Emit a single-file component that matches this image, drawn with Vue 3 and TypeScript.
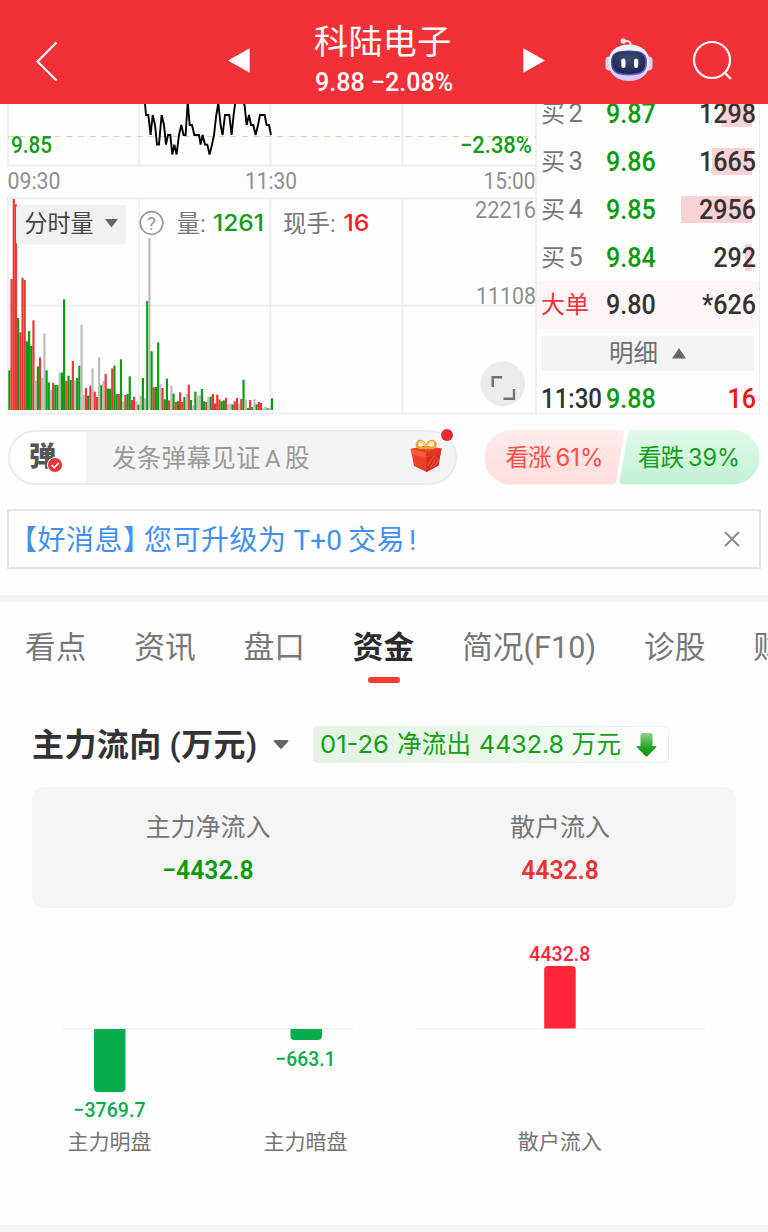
<script setup lang="ts">
type Tone = 'r' | 'g' | 'n'

interface Order {
  side: string
  level: string
  price: string
  volume: string
  depth: number
}

const orders: Order[] = [
  { side: '买', level: '2', price: '9.87', volume: '1298', depth: 31 },
  { side: '买', level: '3', price: '9.86', volume: '1665', depth: 40 },
  { side: '买', level: '4', price: '9.85', volume: '2956', depth: 71 },
  { side: '买', level: '5', price: '9.84', volume: '292', depth: 7 },
]

// One entry per minute: tone followed by height in thirds of a pixel
const series =
  'g119 r393 r633 r617 g276 r233 r396 r390 g206 g237 g192 r269 n87 g131 r158 n96 n230 g119 g83 n60 ' +
  'r82 g75 g75 n112 g112 g332 r88 g103 g90 r147 n88 g96 g133 n256 n45 r66 g43 r73 n125 r55 ' +
  'r39 n158 g74 n87 r108 g64 g64 r125 g133 g48 r48 g152 n26 r45 g48 g101 r30 r39 n26 g16 ' +
  'n43 g96 n36 g327 n516 g176 r68 g69 g203 n78 r66 g32 g94 r29 n73 g49 r24 g26 r53 r24 ' +
  'g39 n48 r76 g30 n14 g55 n44 n44 g63 g26 r24 n39 g40 r48 r20 r46 r32 g26 g29 r37 ' +
  'n17 n19 g17 r26 r36 n19 r33 g91 n32 g6 r30 g9 n32 g17 r24 r21 n5 n9 g5 n7 g35'

const tones: Record<Tone, string> = { r: '#f0353a', g: '#0b9c10', n: '#bdbdbd' }

const volumes = series.split(' ').map((s, i) => {
  const h = Number(s.slice(1)) / 3
  return { x: 8.3 + i * 2.188, y: 306 - h, h, fill: tones[s[0] as Tone] }
})

const pricePoints =
  '144.5,-6 146,11 148.3,11 150.6,31 152.7,11 155,21 157,40.6 159,40.6 161.6,11 164,21 166,40.6 168,31 170.3,31 172.3,50.5 174.3,40.6 176.6,50.5 179,31 181.3,21 183.6,31 185.6,31 187.7,-2 189.7,21 192,21 194.3,31 199,31 200.6,40.6 202.6,31 205,40.6 207.3,40.6 209.6,50.5 212,40.6 214,31 216.3,11 218.3,-1 220.6,21 222.6,31 225,11 229.3,11 231.6,31 233.6,11 235.6,-4 241,-4 244.6,1 246.6,21 249,11 251,21 253.3,21 255.6,31 258,21 260,11 264.6,11 266.6,21 269,21 271,31'

const tabs = ['看点', '资讯', '盘口', '资金', '简况(F10)', '诊股', '财务']
const activeTab = '资金'

const flows = [
  { name: '主力明盘', value: '−3769.7', cx: 109.5, bar: 'M94 92h31.5v59a4 4 0 0 1-4 4h-23.5a4 4 0 0 1-4-4z', ty: 180, w: 72, fill: '#07ad4c' },
  { name: '主力暗盘', value: '−663.1', cx: 305.5, bar: 'M290.5 92h31.5v7a4 4 0 0 1-4 4h-23.5a4 4 0 0 1-4-4z', ty: 128.5, w: 60, fill: '#07ad4c' },
  { name: '散户流入', value: '4432.8', cx: 559.8, bar: 'M544.2 91.5h31.5v-58.5a4 4 0 0 0-4-4h-23.5a4 4 0 0 0-4 4z', ty: 23.5, w: 61, fill: '#ff2438' },
]
</script>

<template>
  <div class="page">
    <header class="top">
      <svg class="back" width="24" height="42" viewBox="0 0 24 42"><path d="M21.500 2.500 2.500 21.500l19 19" /></svg>
      <svg class="prev" width="22" height="26" viewBox="0 0 22 26"><path d="M0 12.500 21.700.2v24.600z" fill="#fff" /></svg>
      <div class="stock">
        <div class="name">科陆电子</div>
        <div class="quote">9.88 −2.08%</div>
      </div>
      <svg class="next" width="22" height="26" viewBox="0 0 22 26"><path d="M22 12.500.3.200v24.600z" fill="#fff" /></svg>
      <svg class="robot" width="50" height="48" viewBox="0 0 50 48">
        <defs>
          <linearGradient id="shell" x1="0" y1="0" x2="0" y2="1">
            <stop offset="0" stop-color="#f3f5fa" /><stop offset=".7" stop-color="#e3e2f4" /><stop offset="1" stop-color="#cfc8f2" />
          </linearGradient>
          <linearGradient id="rim" x1="0" y1="0" x2="1" y2="1">
            <stop offset="0" stop-color="#3c3f7e" /><stop offset=".6" stop-color="#6a4fd6" /><stop offset="1" stop-color="#7a68f5" />
          </linearGradient>
          <radialGradient id="visor" cx=".5" cy=".3" r=".8">
            <stop offset="0" stop-color="#3d4c70" /><stop offset="1" stop-color="#16204a" />
          </radialGradient>
        </defs>
        <path d="M20 6.500c4-1.500 6.500-.2 7 4" fill="none" stroke="#ece9f4" stroke-width="1.800" />
        <circle cx="19.300" cy="6" r="2.700" fill="#f0e8f0" />
        <rect x="1.500" y="21.500" width="8" height="14" rx="4" fill="#cfd6ee" />
        <rect x="40.500" y="21.500" width="8" height="14" rx="4" fill="#cfd6ee" />
        <path d="M25 9.500c12 0 20.500 6.500 20.500 18S37 46 25 46 4.500 39 4.500 27.500 13 9.500 25 9.500z" fill="url(#shell)" />
        <path d="M25 15.500c13 0 18 2.500 18 12s-5 13-18 13-18-3.500-18-13 5-12 18-12z" fill="url(#rim)" />
        <path d="M25 16.500c11.500 0 16.500 2 16.500 10.800S36.500 39 25 39 8.300 36.100 8.300 27.300 13.500 16.500 25 16.500z" fill="url(#visor)" />
        <rect x="17.300" y="23.500" width="4.200" height="9.500" rx="2" fill="#fff" />
        <rect x="30" y="23.500" width="4.200" height="9.500" rx="2" fill="#fff" />
      </svg>
      <svg class="search" width="42" height="42" viewBox="0 0 42 42">
        <circle cx="20" cy="20" r="18" /><path d="m32 32 7 7" />
      </svg>
    </header>

    <section class="market">
      <svg class="chart" width="537" height="311" viewBox="0 0 537 311">
        <g class="grid">
          <path d="M8 0V62M139 0V61M270.500 0V61M402.500 0V61M536 0V311M7 61.500H536" />
          <path d="M8 94V310M139 94V309M270.500 94V309M402.500 94V309M7 94.500H536M8 201.500H536" />
          <path d="M7 309.500H537" />
        </g>
        <path class="dash" d="M8 32.500H536" />
        <polyline class="price" :points="pricePoints" />
        <rect v-for="(v, i) in volumes" :key="i" :x="v.x" :y="v.y" :height="v.h" :fill="v.fill" width="2.200" />
        <g class="tag">
          <text x="11" y="48.500" textLength="41" lengthAdjust="spacingAndGlyphs">9.85</text>
          <text x="460" y="48.500" textLength="72" lengthAdjust="spacingAndGlyphs">−2.38%</text>
        </g>
        <g class="axis">
          <text x="7.500" y="85" textLength="53" lengthAdjust="spacingAndGlyphs">09:30</text>
          <text x="245" y="85" textLength="52" lengthAdjust="spacingAndGlyphs">11:30</text>
          <text x="483.500" y="85" textLength="52" lengthAdjust="spacingAndGlyphs">15:00</text>
          <text x="475" y="113.500" textLength="61" lengthAdjust="spacingAndGlyphs">22216</text>
          <text x="476" y="200" textLength="60" lengthAdjust="spacingAndGlyphs">11108</text>
        </g>
        <rect x="16" y="101" width="110" height="39.500" rx="3" fill="#f1f1f1" />
        <text class="cn dark" x="24.500" y="128" textLength="69" lengthAdjust="spacingAndGlyphs">分时量</text>
        <path d="M105 115h13l-6.500 8.500z" fill="#666" />
        <circle cx="151.500" cy="119" r="11.300" fill="none" stroke="#999" stroke-width="1.700" />
        <text x="151.500" y="126" class="help" text-anchor="middle">?</text>
        <text class="cn" x="176.500" y="127.500">量:</text>
        <text class="fig" x="213" y="127" textLength="51" lengthAdjust="spacingAndGlyphs" fill="#0f9d12">1261</text>
        <text class="cn" x="283" y="127.500">现手:</text>
        <text class="fig" x="343.500" y="127" textLength="26" lengthAdjust="spacingAndGlyphs" fill="#fb1a22">16</text>
        <circle cx="502.800" cy="279.800" r="22.300" fill="#ebebeb" />
        <path d="M492.700 283v-9.700h9.500M514 285v9.700h-10.500" fill="none" stroke="#707070" stroke-width="2.400" />
      </svg>

      <div class="book">
        <div v-for="o in orders" :key="o.level" class="row">
          <span class="side">{{ o.side }}<i>{{ o.level }}</i></span>
          <span class="cell up">{{ o.price }}</span>
          <span class="qty"><b class="depth" :style="{ width: o.depth + 'px' }"></b><span class="cell end">{{ o.volume }}</span></span>
        </div>
        <div class="row big">
          <span class="side hot">大单</span>
          <span class="cell">9.80</span>
          <span class="qty"><span class="cell end">*626</span></span>
        </div>
        <div class="detail">明细<svg width="14" height="11" viewBox="0 0 14 11"><path d="M0 10.500 7 0l7 10.500z" fill="#666" /></svg></div>
        <div class="row last">
          <span class="cell time">11:30</span>
          <span class="cell up">9.88</span>
          <span class="qty"><span class="cell end red">16</span></span>
        </div>
      </div>
    </section>

    <section class="social">
      <div class="danmu">
        <div class="dan">
          <span>弹</span>
          <svg width="16" height="16" viewBox="0 0 16 16"><circle cx="8" cy="8" r="7.500" fill="#f0352f" stroke="#fff" /><path d="m4.500 8 2.700 2.700 4.500-4.700" fill="none" stroke="#fff" stroke-width="1.700" /></svg>
        </div>
        <div class="hint">发条弹幕见证<i>A</i>股</div>
        <svg class="gift" width="34" height="36" viewBox="0 0 34 36">
          <path d="M2 12h30l-2.500 15.500L17.500 34 5 28z" fill="#ea4329" />
          <path d="M17 16h14.500l-2 11.500L17.500 34z" fill="#d92b20" />
          <path d="m21 30 7-11M18.500 28l7-11M25 29l5-8" stroke="#f0684a" stroke-width="1" />
          <path d="M1.500 11 16 8l16.500 2.500-1 6L17 19 2.500 16.500z" fill="#f8603c" />
          <path d="M1.500 11 16 8l16.500 2.500L17 14.500z" fill="#f43c28" />
          <path d="M17 14.500V19l14.500-2.500 1-6z" fill="#df3424" />
          <path d="M17 9C12 11 7.500 10 8 6s6-5 9 3c3-8 9-7 9.500-3S22 11 17 9z" fill="none" stroke="#e9a52e" stroke-width="2.600" />
          <path d="M9.500 5c1.500-3 5.500-1 7 3M18 8c1.500-4 5.500-6 7-3" fill="none" stroke="#ffe08a" stroke-width="1.100" />
        </svg>
        <b class="dot"></b>
      </div>
      <svg class="vote" width="276" height="55" viewBox="0 0 276 55">
        <defs>
          <linearGradient id="bull" x1="0" y1="0" x2="0" y2="1"><stop offset="0" stop-color="#ffecec" /><stop offset="1" stop-color="#fedddb" /></linearGradient>
          <linearGradient id="bear" x1="0" y1="0" x2="0" y2="1"><stop offset="0" stop-color="#e0f9ea" /><stop offset="1" stop-color="#c1f2d5" /></linearGradient>
        </defs>
        <path d="M27.500 0H137q3.500 0 3 3.500L132.500 50q-1 4.500-5 4.500h-100a27.250 27.250 0 0 1 0-54.500z" fill="url(#bull)" />
        <path d="M149.500 0h99a27.250 27.250 0 0 1 0 54.500H139q-4 0-3.300-4L143.800 5q1-5 5.700-5z" fill="url(#bear)" />
        <text x="21.500" y="36" textLength="46" fill="#fc4c47">看涨</text>
        <text class="pct" x="71.500" y="36" textLength="48" lengthAdjust="spacingAndGlyphs" fill="#fc4c47">61%</text>
        <text x="154" y="36" textLength="46" fill="#12a016">看跌</text>
        <text class="pct" x="204" y="36" textLength="52" lengthAdjust="spacingAndGlyphs" fill="#12a016">39%</text>
      </svg>
    </section>

    <section class="notice">
      <span>【好消息<i class="close">】</i>您可升级为<i class="latin">T+0</i>交易<i class="bang">!</i></span>
      <svg width="18" height="18" viewBox="0 0 18 18"><path d="m2 2 14 14M16 2 2 16" stroke="#8d8d8d" stroke-width="2" /></svg>
    </section>

    <div class="band"></div>

    <nav class="tabs">
      <span v-for="t in tabs" :key="t" :class="{ active: t === activeTab }">{{ t }}</span>
    </nav>

    <section class="heading">
      <h2>主力流向<span>(万元)</span></h2>
      <svg width="16" height="9" viewBox="0 0 16 9"><path d="M1.500 0h13a1 1 0 0 1 .8 1.600L9 8.300a1.300 1.300 0 0 1-2 0L.7 1.600A1 1 0 0 1 1.500 0z" fill="#666" /></svg>
      <div class="badge">
        <svg width="301" height="35" viewBox="0 0 301 35">
          <text x="0" y="25.500" textLength="69" lengthAdjust="spacingAndGlyphs">01-26</text>
          <text x="77" y="26" class="zh" textLength="74">净流出</text>
          <text x="159" y="25.500" textLength="85" lengthAdjust="spacingAndGlyphs">4432.8</text>
          <text x="251.500" y="26" class="zh" textLength="49.500">万元</text>
        </svg>
        <svg width="21" height="24" viewBox="0 0 21 24">
          <defs><linearGradient id="down" x1="0" y1="0" x2="0" y2="1"><stop offset="0" stop-color="#8fd08f" /><stop offset=".65" stop-color="#1da321" /><stop offset="1" stop-color="#089a0c" /></linearGradient></defs>
          <path d="M6 0h9q1.500 0 1.500 1.500V13h3q1.500.3.500 1.500L11.500 23q-1 1-2 0L1 14.500Q0 13.300 1.500 13h3V1.500Q4.500 0 6 0z" fill="url(#down)" />
        </svg>
      </div>
    </section>

    <section class="card">
      <div><p>主力净流入</p><strong class="neg">−4432.8</strong></div>
      <div><p>散户流入</p><strong class="pos">4432.8</strong></div>
    </section>

    <svg class="flow" width="768" height="288" viewBox="0 0 768 288">
      <path d="M63 92H353M415.500 92H705" stroke="#f1f1f1" stroke-width="1.500" />
      <g v-for="f in flows" :key="f.name">
        <path :d="f.bar" :fill="f.fill" />
        <text class="val" :x="f.cx - f.w / 2" :y="f.ty" :textLength="f.w" lengthAdjust="spacingAndGlyphs" :fill="f.fill">{{ f.value }}</text>
        <text class="lab" :x="f.cx" y="211.500" text-anchor="middle">{{ f.name }}</text>
      </g>
    </svg>
    <div class="foot"></div>
  </div>
</template>

<style>
body {
  background: #fefefe;
}
</style>

<style scoped>
.page {
  width: 768px;
  height: 1232px;
  overflow: hidden;
  display: flex;
  flex-direction: column;
  background: #fefefe;
  color: #333;
  font-family: Roboto, "Noto Sans CJK SC", sans-serif;
}
i { font-style: normal; }
svg { display: block; flex: none; }

.top {
  flex: none;
  height: 104px;
  box-sizing: border-box;
  padding-top: 17px;
  display: flex;
  align-items: center;
  background: #f23038;
  color: #fff;
}
.top > * { flex: none; }
.back { margin-left: 35px; }
.back path, .search { fill: none; stroke: #fff; stroke-width: 2.200; }
.prev { margin-left: 169px; }
.stock { margin-left: 65px; width: 138px; }
.name { font-size: 34px; line-height: 42px; letter-spacing: .4px; white-space: nowrap; margin-left: -1px; }
.quote {
  font-size: 26px;
  line-height: 38px;
  font-weight: 500;
  white-space: nowrap;
  transform: scaleX(.965);
  transform-origin: left;
}
.next { margin-left: 70px; }
.robot { margin-left: 58.500px; margin-top: -4px; }
.search { margin-left: 38.500px; }

.market { flex: none; height: 311px; display: flex; overflow: hidden; }
.chart { overflow: visible; }
.grid path { fill: none; stroke: #ececec; stroke-width: 1.500; }
.dash { stroke: #e9cf9f; stroke-width: 1.200; stroke-dasharray: 6 5.700; }
.price { fill: none; stroke: #000; stroke-width: 1.900; }
.tag { font-size: 24px; font-weight: 500; fill: #109d12; }
.axis { font-size: 24px; fill: #8f8f8f; }
.cn { font-size: 23.500px; fill: #777; }
.dark { fill: #444; }
.help { font-size: 19px; fill: #999; }
.fig { font-family: Inter, Roboto, sans-serif; font-size: 23px; font-weight: 500; }

.book {
  width: 223px;
  height: 310px;
  box-sizing: border-box;
  overflow: hidden;
  border-right: 1.500px solid #ececec;
  border-bottom: 1.500px solid #ececec;
  font-size: 27px;
}
.row {
  height: 48px;
  line-height: 48px;
  display: grid;
  grid-template-columns: 65px 60px 1fr;
  padding: 0 3px 0 4px;
  align-items: center;
}
.row:first-child { margin-top: -15px; }
.side { font-size: 24px; color: #777; white-space: nowrap; }
.side i { font-size: 25.500px; margin-left: 3.500px; }
.hot { color: #f33138; }
.cell { font-weight: 500; display: block; transform: scaleX(.93); transform-origin: left; white-space: nowrap; font-size: 27px; }
.end { transform-origin: right; text-align: right; position: relative; }
.up { color: #0b9b0b; }
.red { color: #fb1018; }
.qty { position: relative; }
.depth { position: absolute; right: 4px; top: 10.500px; height: 27px; background: #f9d2d5; }
.big { background: #fef5f6; }
.cell.time { transform: scaleX(.89); }
.detail {
  margin: 7px 5px 0 4px;
  height: 35px;
  line-height: 33px;
  background: #f4f4f4;
  color: #707070;
  font-size: 24.500px;
  display: flex;
  align-items: center;
  justify-content: center;
  gap: 14px;
}
.last { margin-top: 4px; }

.social { flex: none; display: flex; margin: 15px 0 0 8px; height: 55px; }
.danmu {
  width: 449px;
  height: 55px;
  box-sizing: border-box;
  border: 2px solid #ebebeb;
  border-radius: 28px;
  background: #f4f4f4;
  display: flex;
  align-items: center;
  position: relative;
}
.dan {
  width: 76px;
  height: 51px;
  box-sizing: border-box;
  padding-left: 19px;
  background: #fff;
  border-radius: 26px 0 0 26px;
  font-size: 27px;
  line-height: 50px;
  font-weight: 900;
  color: #555;
  position: relative;
}
.dan svg { position: absolute; left: 37px; top: 25px; }
.hint { margin-left: 26px; font-size: 24.500px; line-height: 49px; margin-top: 2px; color: #999; white-space: nowrap; letter-spacing: .3px; }
.hint i { margin: 0 4px; }
.gift { position: absolute; left: 399px; top: 6px; }
.dot { position: absolute; left: 431px; top: -3px; width: 12px; height: 12px; border-radius: 50%; background: #e8282c; }
.vote { margin-left: 27px; font-size: 23.500px; }
.pct { font-family: Inter, Roboto, sans-serif; font-size: 24px; }

.notice {
  flex: none;
  width: 754px;
  height: 60px;
  box-sizing: border-box;
  margin: 24px 0 0 7px;
  border: 2px solid #e5e5e5;
  padding: 0 18px 0 0;
  display: flex;
  align-items: center;
  justify-content: space-between;
  color: #438fee;
  font-size: 28px;
  letter-spacing: .5px;
  white-space: nowrap;
}
.notice > span { line-height: 56px; margin-top: 3px; }
.close { display: inline-block; width: 21px; }
.latin { margin: 0 6px 0 7px; letter-spacing: 0; }
.bang { margin-left: 4px; }

.band { flex: none; height: 7px; margin-top: 26px; background: #f4f4f4; }

.tabs { flex: none; height: 88px; display: flex; gap: 47.900px; padding-left: 25px; font-size: 30.700px; line-height: 91px; color: #777; white-space: nowrap; }
.tabs span { position: relative; }
.tabs .active { color: #2c2c2c; font-weight: 700; }
.tabs .active::after {
  content: "";
  position: absolute;
  left: 50%;
  top: 75px;
  width: 32px;
  height: 6px;
  margin-left: -16px;
  border-radius: 3px;
  background: #fb3a31;
}

.heading { flex: none; height: 37px; margin-top: 36px; padding-left: 32px; display: flex; align-items: center; }
h2 { margin: 0; width: 226px; font-size: 32px; line-height: 42px; letter-spacing: .4px; font-weight: 600; white-space: nowrap; }
h2 span { margin-left: 8px; }
.heading > svg { margin-left: 15px; }
.badge {
  margin-left: 24px;
  width: 356px;
  height: 37px;
  box-sizing: border-box;
  border: 1px solid #e8f4e9;
  border-radius: 4px;
  background: linear-gradient(90deg, #e3f3e4, #edf8ee 60%, #fefefe);
  display: flex;
  align-items: center;
  justify-content: space-between;
  padding: 0 11px 0 6px;
}
.badge text { fill: #12a016; font-family: Inter, Roboto, sans-serif; font-size: 24.500px; }
.badge .zh { font-family: "Noto Sans CJK SC", sans-serif; font-size: 24.500px; }

.card {
  flex: none;
  width: 704px;
  height: 121px;
  margin: 24px 0 0 32px;
  border-radius: 12px;
  background: #f5f5f5;
  display: grid;
  grid-template-columns: 1fr 1fr;
  text-align: center;
}
.card p { margin: 22px 0 0; font-size: 25px; line-height: 37px; color: #757575; }
.card strong { display: block; margin-top: 4px; font-size: 26px; line-height: 40px; font-weight: 600; transform: scaleX(.95); }
.neg { color: #0b9b0b; }
.pos { color: #ea3337; }

.flow { margin-top: 29px; }
.val { font-size: 21px; font-weight: 500; }
.lab { font-size: 21px; fill: #757575; }
.foot { flex: none; height: 8px; background: #f4f4f4; }
</style>
